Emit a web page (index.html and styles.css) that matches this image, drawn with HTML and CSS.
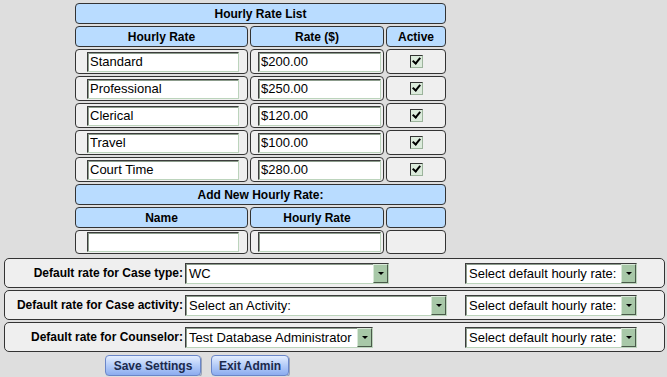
FILE: index.html
```html
<!DOCTYPE html>
<html lang="en">
<head>
    <meta charset="UTF-8">
    <title>Hourly Rate List</title>
    <link rel="stylesheet" href="styles.css">
</head>
<body>
    <div class="rates">
        <div class="cell head span3">Hourly Rate List</div>
        <div class="cell head">Hourly Rate</div>
        <div class="cell head">Rate ($)</div>
        <div class="cell head">Active</div>

        <div class="cell row name-cell"><input class="field name-field" type="text" value="Standard"></div>
        <div class="cell row rate-cell"><input class="field rate-field" type="text" value="$200.00"></div>
        <div class="cell row"><span class="check"></span></div>

        <div class="cell row name-cell"><input class="field name-field" type="text" value="Professional"></div>
        <div class="cell row rate-cell"><input class="field rate-field" type="text" value="$250.00"></div>
        <div class="cell row"><span class="check"></span></div>

        <div class="cell row name-cell"><input class="field name-field" type="text" value="Clerical"></div>
        <div class="cell row rate-cell"><input class="field rate-field" type="text" value="$120.00"></div>
        <div class="cell row"><span class="check"></span></div>

        <div class="cell row name-cell"><input class="field name-field" type="text" value="Travel"></div>
        <div class="cell row rate-cell"><input class="field rate-field" type="text" value="$100.00"></div>
        <div class="cell row"><span class="check"></span></div>

        <div class="cell row name-cell"><input class="field name-field" type="text" value="Court Time"></div>
        <div class="cell row rate-cell"><input class="field rate-field" type="text" value="$280.00"></div>
        <div class="cell row"><span class="check"></span></div>

        <div class="cell head span3">Add New Hourly Rate:</div>
        <div class="cell head">Name</div>
        <div class="cell head">Hourly Rate</div>
        <div class="cell head"></div>

        <div class="cell row new-row name-cell"><input class="field name-field" type="text"></div>
        <div class="cell row new-row rate-cell"><input class="field rate-field" type="text"></div>
        <div class="cell row new-row"></div>
    </div>

    <div class="setting">
        <span class="setting-label">Default rate for Case type:</span>
        <div class="setting-main">
            <div class="select sel-type"><span class="sel-text">WC</span><span class="sel-arrow"></span></div>
        </div>
        <div class="select sel-rate"><span class="sel-text">Select default hourly rate:</span><span class="sel-arrow"></span></div>
    </div>
    <div class="setting">
        <span class="setting-label">Default rate for Case activity:</span>
        <div class="setting-main">
            <div class="select sel-activity"><span class="sel-text">Select an Activity:</span><span class="sel-arrow"></span></div>
        </div>
        <div class="select sel-rate"><span class="sel-text">Select default hourly rate:</span><span class="sel-arrow"></span></div>
    </div>
    <div class="setting">
        <span class="setting-label">Default rate for Counselor:</span>
        <div class="setting-main">
            <div class="select sel-counselor"><span class="sel-text">Test Database Administrator</span><span class="sel-arrow"></span></div>
        </div>
        <div class="select sel-rate"><span class="sel-text">Select default hourly rate:</span><span class="sel-arrow"></span></div>
    </div>

    <div class="actions">
        <button class="btn btn-save">Save Settings</button>
        <button class="btn btn-exit">Exit Admin</button>
    </div>
</body>
</html>
```

FILE: styles.css
```css
body {
    margin: 3px 2px 0 4px;
    background-color: #dedede;
    font-family: "Liberation Sans", Arial, sans-serif;
    font-size: 12px;
    color: #000;
}
.rates {
    display: grid;
    grid-template-columns: 173px 134px 60px;
    gap: 2px;
    margin-left: 71px;
    width: 371px;
}
.cell {
    box-sizing: border-box;
    border: 1px solid #333;
    border-radius: 4px;
    background-color: #efefef;
    display: flex;
    align-items: center;
    justify-content: center;
}
.head {
    height: 21px;
    background-color: #b9dcff;
    font-weight: bold;
}
.span3 {
    grid-column: span 3;
}
.row {
    height: 25px;
}
.new-row {
    height: 24px;
}
.name-cell {
    justify-content: flex-start;
    padding-left: 11px;
}
.rate-cell {
    justify-content: flex-start;
    padding-left: 7px;
}
.field {
    box-sizing: border-box;
    height: 20px;
    margin: 0;
    padding: 0 2px;
    border: 1px solid;
    border-color: #3c3c3c #bcd4bc #bcd4bc #3c3c3c;
    box-shadow: inset 1px 1px 0 #8c9c8c;
    background: #fff;
    font-family: "Liberation Sans", Arial, sans-serif;
    font-size: 13px;
    color: #000;
    outline: none;
}
.name-field {
    width: 152px;
}
.rate-field {
    width: 123px;
}
.check {
    box-sizing: border-box;
    width: 13px;
    height: 13px;
    border: 1px solid;
    border-color: #333 #9cb49c #9cb49c #333;
    background-color: #dcebdc;
    position: relative;
}
.check::after {
    content: "";
    position: absolute;
    left: 3px;
    top: 0px;
    width: 3px;
    height: 6px;
    border: solid #000;
    border-width: 0 2px 2px 0;
    transform: rotate(40deg);
}
.setting {
    box-sizing: border-box;
    display: flex;
    align-items: center;
    height: 30px;
    margin-top: 2px;
    border: 1px solid #333;
    border-radius: 5px;
    background-color: #efefef;
}
.rates + .setting {
    margin-top: 4px;
}
.setting-label {
    width: 178px;
    margin-right: 2px;
    text-align: right;
    font-weight: bold;
    white-space: nowrap;
}
.setting-main {
    width: 280px;
}
.select {
    box-sizing: border-box;
    display: flex;
    align-items: center;
    height: 21px;
    border: 1px solid;
    border-color: #3c3c3c #bcd4bc #bcd4bc #3c3c3c;
    box-shadow: inset 1px 1px 0 #8c9c8c;
    background-color: #fff;
    font-size: 13px;
}
.sel-text {
    flex: 1;
    padding-left: 3px;
    white-space: nowrap;
    overflow: hidden;
}
.sel-arrow {
    box-sizing: border-box;
    width: 15px;
    height: 19px;
    border: 1px solid #5a6a5a;
    border-color: #d8e8d8 #4a5a4a #4a5a4a #d8e8d8;
    background-color: #a8c8a8;
    position: relative;
}
.sel-arrow::after {
    content: "";
    position: absolute;
    left: 4px;
    top: 7px;
    border-left: 3px solid transparent;
    border-right: 3px solid transparent;
    border-top: 3px solid #000;
}
.sel-type {
    width: 204px;
}
.sel-activity {
    width: 262px;
}
.sel-counselor {
    width: 188px;
}
.sel-rate {
    width: 172px;
}
.actions {
    display: flex;
    gap: 10px;
    margin-top: 3px;
    padding-left: 101px;
}
.btn {
    height: 21px;
    padding: 0 6px;
    border: 1px solid #6a86c8;
    border-radius: 4px;
    background: linear-gradient(#e4eeff, #b4ccf8 50%, #8cacef);
    box-shadow: 1px 1px 0 #9aa4b8;
    font-family: "Liberation Sans", Arial, sans-serif;
    font-size: 12px;
    font-weight: bold;
    color: #1c2a4c;
    cursor: pointer;
}
.btn-save {
    width: 96px;
}
.btn-exit {
    width: 78px;
}
```
